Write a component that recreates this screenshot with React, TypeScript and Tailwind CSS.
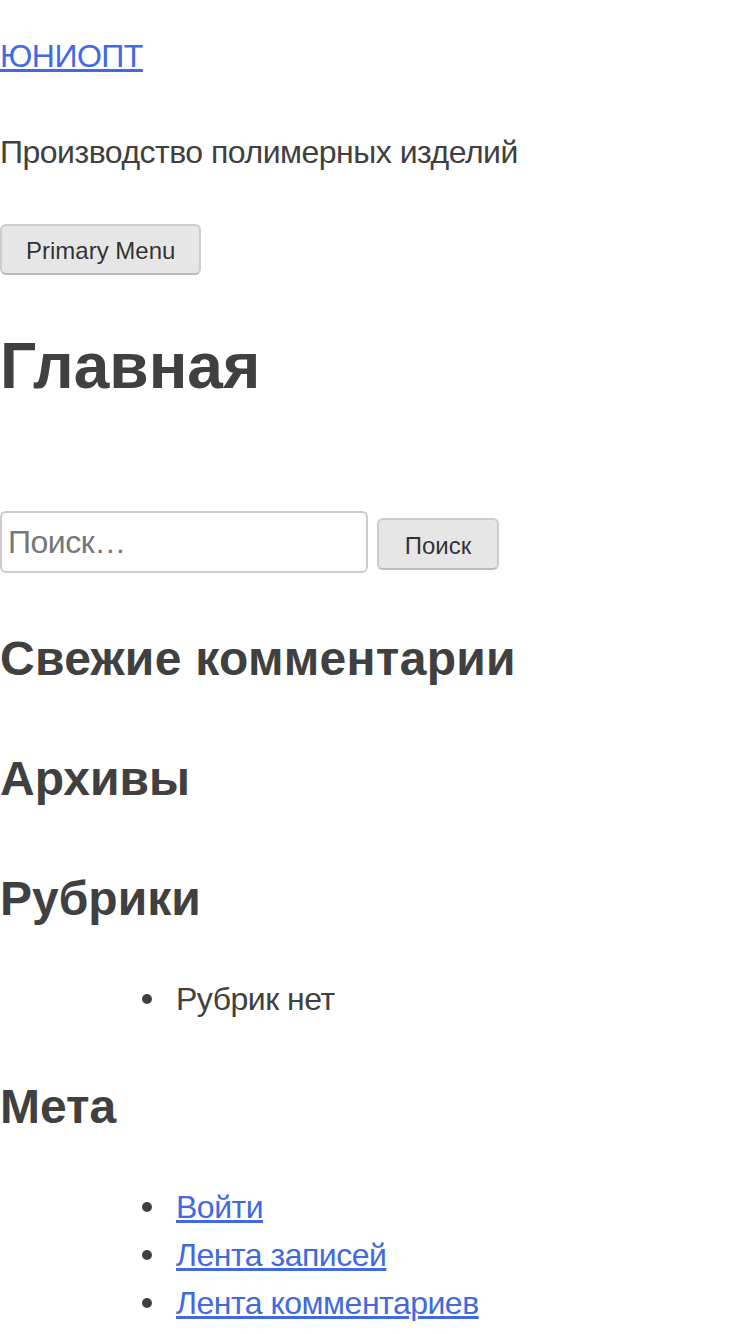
const items = ["Войти", "Лента записей", "Лента комментариев"];

function Bullet() {
  return <span className="absolute left-[-34px] top-[19px] h-[10px] w-[10px] rounded-full bg-[#404040]" />;
}

export default function App() {
  return (
    <div className="min-h-[1334px] bg-white font-['Liberation_Sans',Arial,sans-serif] text-[32px] leading-[48px] tracking-[-0.5px] text-[#404040]">
      {/* Header */}
      <header>
        <p className="pt-[32px]">
          <a href="#" className="text-[#4169e1] underline">
            ЮНИОПТ
          </a>
        </p>
        <p className="mt-[48px]">Производство полимерных изделий</p>
        <nav className="mt-[48px] flex">
          <button className="h-[51px] rounded-[6px] border-2 border-[#ccc] border-b-[#bbb] bg-[#e6e6e6] px-[24px] pt-[3px] text-[24px] leading-[24px] tracking-normal text-black/80">
            Primary Menu
          </button>
        </nav>
      </header>

      {/* Content */}
      <main>
        <h1 className="mt-[43px] text-[64px] font-bold leading-[96px] tracking-normal">Главная</h1>
      </main>

      {/* Sidebar */}
      <aside className="pt-[97px]">
        <form className="flex items-start gap-[9px]" onSubmit={(e) => e.preventDefault()}>
          <input
            type="search"
            placeholder="Поиск…"
            className="h-[62px] w-[368px] rounded-[6px] border-2 border-[#ccc] px-[6px] text-[32px] text-[#666] placeholder:text-[#777] outline-none"
          />
          <button className="mt-[7px] h-[52px] w-[122px] rounded-[6px] border-2 border-[#ccc] border-b-[#bbb] bg-[#e6e6e6] pt-[3px] text-[24px] leading-[24px] tracking-normal text-black/80">
            Поиск
          </button>
        </form>

        <h2 className="mt-[50px] text-[48px] font-bold leading-[72px] tracking-[0.3px]">Свежие комментарии</h2>
        <h2 className="mt-[48px] text-[48px] font-bold leading-[72px] tracking-normal">Архивы</h2>
        <h2 className="mt-[48px] text-[48px] font-bold leading-[72px] tracking-normal">Рубрики</h2>
        <ul className="mt-[40px] pl-[176px]">
          <li className="relative">
            <Bullet />
            Рубрик нет
          </li>
        </ul>
        <h2 className="mt-[48px] text-[48px] font-bold leading-[72px] tracking-normal">Мета</h2>
        <ul className="mt-[40px] pl-[176px]">
          {items.map((t) => (
            <li key={t} className="relative">
              <Bullet />
              <a href="#" className="text-[#4169e1] underline">
                {t}
              </a>
            </li>
          ))}
        </ul>
      </aside>
    </div>
  );
}
